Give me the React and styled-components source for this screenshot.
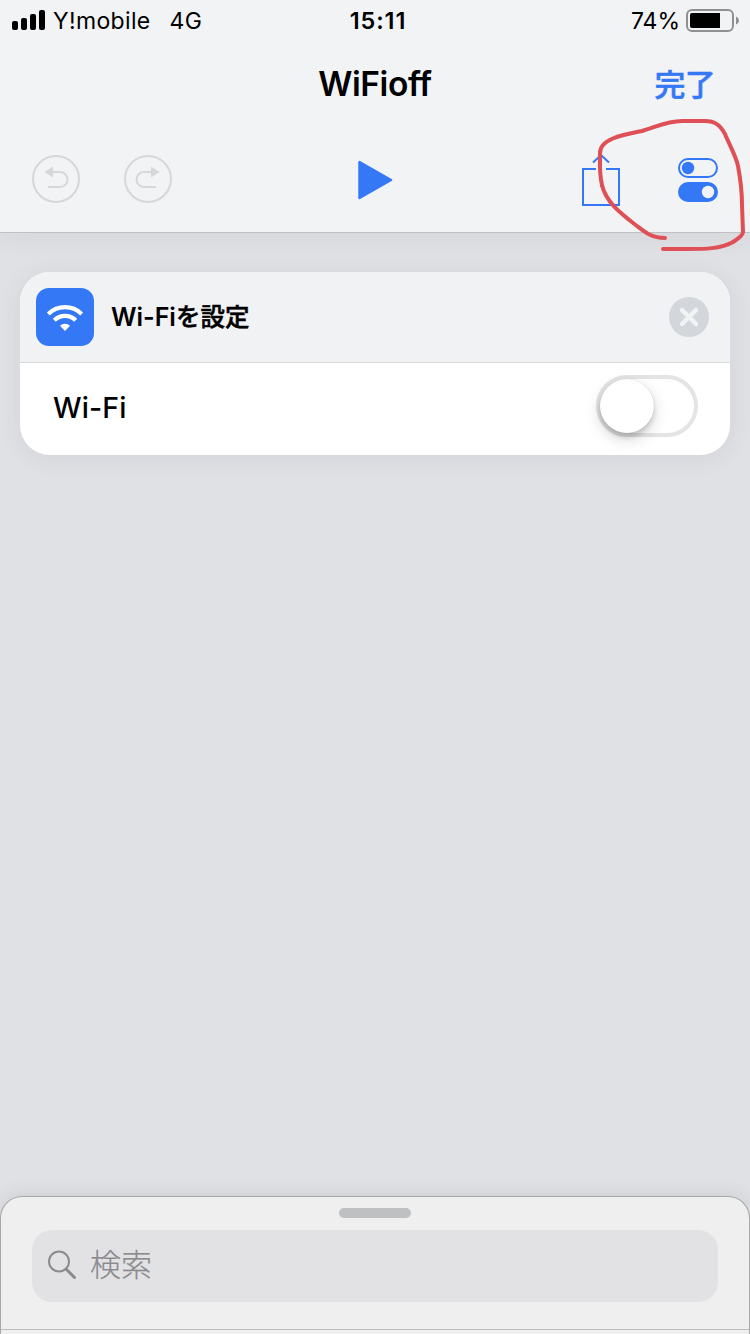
import React from "react";
import styled, { createGlobalStyle } from "styled-components";

const BLUE = "#3478f6";

const GlobalStyle = createGlobalStyle`
  * { box-sizing: border-box; }
  html, body { margin: 0; padding: 0; background: #e0e1e5; }
  body { overflow: hidden; }
`;

const Screen = styled.div`
  position: relative;
  width: 750px;
  height: 1334px;
  display: flex;
  flex-direction: column;
  overflow: hidden;
  background: #e0e1e5;
  color: #000;
  font-family: Inter, "Noto Sans CJK JP", sans-serif;
  svg { display: block; flex: none; overflow: visible; }
`;

const Header = styled.header`
  height: 233px;
  flex: none;
  background: #f2f3f4;
  border-bottom: 1px solid #c0c1c4;
  box-shadow: 0 4px 24px rgba(60, 60, 70, 0.07);
`;

const StatusBar = styled.div`
  height: 40px;
  display: grid;
  grid-template-columns: 1fr auto 1fr;
  align-items: center;
  padding: 0 11px 0 12px;
`;

const StatusGroup = styled.div`
  display: flex;
  align-items: center;
  justify-content: ${(p) => (p.$end ? "flex-end" : "flex-start")};
`;

const StatusText = styled.span`
  font-size: ${(p) => p.$size || 23}px;
  line-height: 38px;
  padding-top: 2px;
  font-weight: ${(p) => p.$weight || 400};
  letter-spacing: ${(p) => p.$track || 0}px;
  margin-left: ${(p) => p.$left || 0}px;
  margin-right: ${(p) => p.$right || 0}px;
  white-space: nowrap;
`;

const NavBar = styled.div`
  height: 88px;
  display: grid;
  grid-template-columns: 1fr auto 1fr;
  align-items: center;
  padding: 0 35px;
`;

const Title = styled.h1`
  grid-column: 2;
  margin: 0;
  font-size: 33.5px;
  line-height: 88px;
  font-weight: 600;
  letter-spacing: -0.45px;
`;

const DoneButton = styled.button`
  justify-self: end;
  border: 0;
  padding: 0 0 2px;
  background: none;
  color: ${BLUE};
  font-family: "Noto Sans CJK JP", sans-serif;
  font-size: 31px;
  line-height: 84px;
  font-weight: 500;
  letter-spacing: -0.8px;
  -webkit-text-stroke: 0.5px ${BLUE};
`;

const Toolbar = styled.div`
  height: 104px;
  display: flex;
  align-items: center;
  padding: 0 32px;
`;

const ToolButton = styled.button`
  border: 0;
  padding: 0 0 ${(p) => p.$raise || 0}px;
  background: none;
  margin-left: ${(p) => p.$gap || 0}px;
`;

const Editor = styled.main`
  flex: 1;
  padding: 39px 20px 0;
`;

const Card = styled.section`
  height: 183px;
  border-radius: 30px;
  overflow: hidden;
  background: #fff;
  box-shadow: 0 3px 24px rgba(60, 60, 75, 0.08);
`;

const CardHeader = styled.div`
  height: 91px;
  display: flex;
  align-items: center;
  padding: 0 21px 0 16px;
  background: #f1f2f4;
  border-bottom: 1px solid #d9dadc;
`;

const AppIcon = styled.div`
  width: 58px;
  height: 58px;
  border-radius: 13px;
  background: ${BLUE};
`;

const CardTitle = styled.h2`
  flex: 1;
  margin: 0 0 0 17px;
  font-size: 25px;
  line-height: 58px;
  font-weight: 600;
  letter-spacing: 0;
`;

const TitleSuffix = styled.span`
  font-family: "Noto Sans CJK JP", sans-serif;
  font-size: 24.5px;
  line-height: 1;
  font-weight: 500;
  -webkit-text-stroke: 0.5px #000;
`;

const CloseButton = styled.button`
  border: 0;
  padding: 0;
  background: none;
`;

const SettingRow = styled.div`
  height: 92px;
  display: flex;
  align-items: center;
  justify-content: space-between;
  padding: 0 32px 6px 33px;
`;

const SettingLabel = styled.span`
  font-size: 28.5px;
  line-height: 60px;
  padding-top: 4px;
  font-weight: 500;
  letter-spacing: 0.1px;
`;

const Switch = styled.div`
  width: 102px;
  height: 62px;
  border: 4px solid #e4e4e4;
  border-radius: 31px;
  display: flex;
`;

const Knob = styled.div`
  width: 54px;
  height: 54px;
  border-radius: 50%;
  background: #fff;
  box-shadow: 0 6px 16px rgba(0, 0, 0, 0.16), 0 4px 5px rgba(0, 0, 0, 0.14), 0 0 1px rgba(0, 0, 0, 0.2);
`;

const Drawer = styled.footer`
  height: 138px;
  flex: none;
  display: flex;
  flex-direction: column;
  align-items: center;
  background: #efefef;
  border: 1px solid #a7a8aa;
  border-bottom: 0;
  border-radius: 22px 22px 0 0;
  box-shadow: 0 -2px 18px rgba(60, 60, 70, 0.11);
`;

const Handle = styled.div`
  width: 72px;
  height: 10px;
  margin-top: 11px;
  border-radius: 5px;
  background: #bfc0c1;
`;

const SearchField = styled.div`
  width: 686px;
  height: 72px;
  margin-top: 12px;
  display: flex;
  align-items: center;
  padding: 0 0 2px 16px;
  border-radius: 20px;
  background: #e2e2e4;
  color: #8b8b8f;
`;

const Placeholder = styled.span`
  margin-left: 13px;
  font-family: "Noto Sans CJK JP", sans-serif;
  font-size: 31px;
  line-height: 64px;
  font-weight: 300;
  padding-bottom: 4px;
  -webkit-text-stroke: 0.2px #8b8b8f;
`;

const Divider = styled.div`
  width: 100%;
  height: 1px;
  margin-top: 27px;
  background: #bcbcbe;
`;

const Annotation = styled.svg`
  position: absolute;
  left: 590px;
  top: 110px;
  pointer-events: none;
`;

const SignalIcon = () => (
  <svg width="34" height="20" viewBox="0 0 34 20">
    <rect x="0" y="11" width="6" height="9" rx="2" />
    <rect x="9" y="8" width="6" height="12" rx="2" />
    <rect x="18" y="4" width="6" height="16" rx="2" />
    <rect x="27" y="0" width="6" height="20" rx="2" />
  </svg>
);

const BatteryIcon = () => (
  <svg width="53" height="22" viewBox="0 0 53 22">
    <rect x="1" y="1" width="46" height="21" rx="5" fill="none" stroke="#8f9092" strokeWidth="2" />
    <path d="M6 4h28v15H6a2 2 0 0 1-2-2V6a2 2 0 0 1 2-2z" />
    <path d="M50 7.500c4 2 4 6 0 8z" fill="#8f9092" />
  </svg>
);

const HistoryIcon = ({ redo }) => (
  <svg width="48" height="48" viewBox="0 0 48 48" fill="none" stroke="#d6d7d9" strokeWidth="2">
    <circle cx="24" cy="24" r="23" />
    <g transform={redo ? "translate(48 0) scale(-1 1)" : undefined}>
      <path d="M20 17h8a7.500 7.500 0 0 1 0 15H16" />
      <path d="M12.500 17l8.500-5.500v11z" fill="#d6d7d9" stroke="none" />
    </g>
  </svg>
);

const PlayIcon = () => (
  <svg width="35" height="40" viewBox="0 0 35 40">
    <path d="M1.500 2v36L33 20z" fill={BLUE} stroke={BLUE} strokeWidth="2.500" strokeLinejoin="round" />
  </svg>
);

const ShareIcon = () => (
  <svg width="38" height="54" viewBox="0 0 38 54" fill="none" stroke={BLUE} strokeWidth="2">
    <path d="M14 16H1v36h36V16H24" />
    <path d="M11 9.500L19 2l8 7.500M19 2v32" />
  </svg>
);

const TogglesIcon = () => (
  <svg width="40" height="44" viewBox="0 0 40 44">
    <rect x="1" y="1" width="38" height="18" rx="9" fill="none" stroke={BLUE} strokeWidth="2" />
    <circle cx="10" cy="10" r="6.200" fill={BLUE} />
    <rect x="0" y="24" width="40" height="20" rx="10" fill={BLUE} />
    <circle cx="30" cy="34" r="6.200" fill="#f2f3f4" />
  </svg>
);

const WifiIcon = () => (
  <svg width="58" height="58" viewBox="0 0 58 58" fill="none" stroke="#fff" strokeWidth="4.200">
    <path d="M12.300 26a23.700 23.700 0 0 1 33.400 0" />
    <path d="M18.300 32.300a15.200 15.200 0 0 1 21.400 0" />
    <path d="M24 37.800a7.100 7.100 0 0 1 10 0L29 43z" fill="#fff" stroke="none" />
  </svg>
);

const CloseIcon = () => (
  <svg width="40" height="40" viewBox="0 0 40 40">
    <circle cx="20" cy="20" r="20" fill="#d3d6db" />
    <path d="M13 13l14 14M27 13L13 27" stroke="#f2f3f5" strokeWidth="4.500" strokeLinecap="round" />
  </svg>
);

const SearchIcon = () => (
  <svg width="29" height="30" viewBox="0 0 29 30" fill="none" stroke="#8b8b8f">
    <circle cx="11" cy="11.500" r="10" strokeWidth="2" />
    <path d="M18.500 19.500l8 8" strokeWidth="3" strokeLinecap="round" />
  </svg>
);

export default function App() {
  return (
    <Screen>
      <GlobalStyle />
      <Header>
        <StatusBar>
          <StatusGroup>
            <SignalIcon />
            <StatusText $left={7} $track={0.35}>Y!mobile</StatusText>
            <StatusText $left={19} $track={0.4}>4G</StatusText>
          </StatusGroup>
          <StatusText $weight={600} $size={23.5} $left={5} $track={0.9}>15:11</StatusText>
          <StatusGroup $end>
            <StatusText $right={6}>74%</StatusText>
            <BatteryIcon />
          </StatusGroup>
        </StatusBar>
        <NavBar>
          <Title>WiFioff</Title>
          <DoneButton>完了</DoneButton>
        </NavBar>
        <Toolbar>
          <ToolButton $raise={2} aria-label="Undo"><HistoryIcon /></ToolButton>
          <ToolButton $raise={2} $gap={44} aria-label="Redo"><HistoryIcon redo /></ToolButton>
          <ToolButton $gap={186} aria-label="Run"><PlayIcon /></ToolButton>
          <ToolButton $gap={189} aria-label="Share"><ShareIcon /></ToolButton>
          <ToolButton $gap={58} aria-label="Settings"><TogglesIcon /></ToolButton>
        </Toolbar>
      </Header>
      <Editor>
        <Card>
          <CardHeader>
            <AppIcon><WifiIcon /></AppIcon>
            <CardTitle>Wi-Fi<TitleSuffix>を設定</TitleSuffix></CardTitle>
            <CloseButton aria-label="Remove"><CloseIcon /></CloseButton>
          </CardHeader>
          <SettingRow>
            <SettingLabel>Wi-Fi</SettingLabel>
            <Switch role="switch" aria-checked="false"><Knob /></Switch>
          </SettingRow>
        </Card>
      </Editor>
      <Drawer>
        <Handle />
        <SearchField>
          <SearchIcon />
          <Placeholder>検索</Placeholder>
        </SearchField>
        <Divider />
      </Drawer>
      <Annotation width="160" height="145" viewBox="590 110 160 145" fill="none" stroke="#df5056" strokeWidth="4" strokeLinecap="round" strokeLinejoin="round">
        <path d="M665 238C652 238 646 233 637 226C623 215 606 203 602 185C599 172 600 162 600 153C600 139 622 135 642 131C656 127 667 121 682 121H705C715 121 720 125 725 134C729 144 736 156 738 166C741 182 742 192 742 205L743 232C743 236 736 240 733 242C721 249 704 249 686 249H663" />
      </Annotation>
    </Screen>
  );
}
